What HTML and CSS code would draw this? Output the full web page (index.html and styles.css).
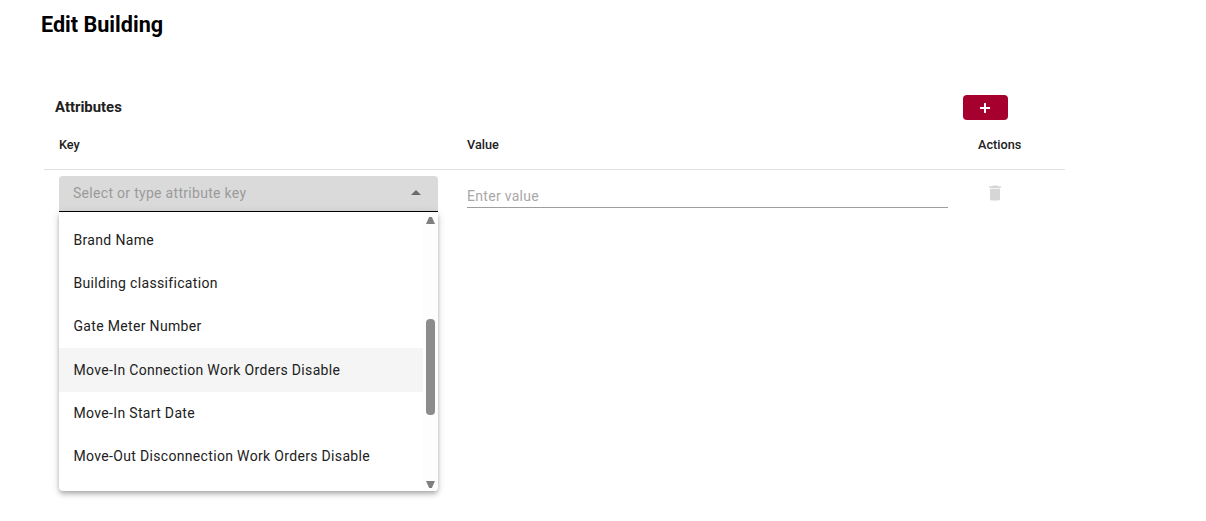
FILE: index.html
```
<!DOCTYPE html>
<html lang="en">
<head>
<meta charset="utf-8">
<title>Edit Building</title>
<link rel="stylesheet" href="styles.css">
</head>
<body>
<main class="page">
  <h1 class="title">Edit Building</h1>
  <section class="attributes">
    <div class="attr-head">
      <h2 class="attr-title">Attributes</h2>
      <button class="add-btn" type="button" aria-label="Add">
        <svg class="plus" width="12" height="12" viewBox="0 0 12 12"><path d="M6 1v10M1 6h10" stroke="#fff" stroke-width="2" fill="none"/></svg>
      </button>
    </div>
    <div class="grid grid-head">
      <div class="col-key">Key</div>
      <div class="col-value">Value</div>
      <div class="col-actions">Actions</div>
    </div>
    <div class="grid grid-row">
      <div class="key-cell">
        <div class="select">
          <span class="select-text">Select or type attribute key</span>
          <span class="caret"></span>
        </div>
        <div class="panel">
          <ul class="options">
            <li class="option">Brand Name</li>
            <li class="option">Building classification</li>
            <li class="option">Gate Meter Number</li>
            <li class="option active">Move-In Connection Work Orders Disable</li>
            <li class="option">Move-In Start Date</li>
            <li class="option">Move-Out Disconnection Work Orders Disable</li>
          </ul>
          <div class="scrollbar">
            <span class="arrow-up"></span>
            <span class="thumb"></span>
            <span class="arrow-down"></span>
          </div>
        </div>
      </div>
      <div class="value-cell">
        <div class="value-input">Enter value</div>
      </div>
      <div class="action-cell">
        <svg class="trash" viewBox="0 0 24 24"><path d="M6 19c0 1.100.9 2 2 2h8c1.100 0 2-.9 2-2V7H6v12zM19 4h-3.500l-1-1h-5l-1 1H5v2h14V4z" fill="#d6d6d6"/></svg>
      </div>
    </div>
  </section>
</main>
</body>
</html>
```
FILE: styles.css
```
* { box-sizing: border-box; }
html, body { margin: 0; padding: 0; background: #fff; }
body {
  width: 1206px;
  height: 521px;
  overflow: hidden;
  font-family: Roboto, "Liberation Sans", sans-serif;
  color: #212121;
}
.page { padding: 11px 0 0 41px; }
.title {
  margin: 0;
  font-size: 21.600px;
  line-height: 28px;
  font-weight: 700;
  color: #000;
}
.attributes { width: 1021px; margin: 56px 0 0 3px; }
.attr-head {
  display: flex;
  justify-content: space-between;
  align-items: center;
  height: 25px;
  padding: 0 57px 0 11px;
}
.attr-title {
  margin: -2px 0 0;
  font-size: 14.900px;
  font-weight: 700;
  color: #212121;
}
.add-btn {
  display: flex;
  align-items: center;
  justify-content: center;
  width: 45px;
  height: 25px;
  padding: 0;
  border: 0;
  border-radius: 4px;
  background: #a5002e;
}
.plus { margin-right: 1px; }
.grid {
  display: grid;
  grid-template-columns: 408px 511px 1fr;
  padding-left: 15px;
}
.grid-head {
  height: 50px;
  align-items: center;
  border-bottom: 1px solid #e0e0e0;
  font-size: 12.700px;
  font-weight: 500;
  color: #212121;
}
.grid-row { padding-top: 6px; }
.key-cell { position: relative; width: 379px; }
.select {
  display: flex;
  align-items: center;
  justify-content: space-between;
  height: 36px;
  padding: 0 17px 2px 14px;
  background: #dadada;
  border-bottom: 1.500px solid #000;
  border-radius: 4px 4px 0 0;
  font-size: 14px;
  letter-spacing: .3px;
  color: #9a9a9a;
}
.caret {
  width: 0;
  height: 0;
  border-left: 5px solid transparent;
  border-right: 5px solid transparent;
  border-bottom: 5px solid #6b6b6b;
}
.panel {
  position: absolute;
  top: 36px;
  left: 0;
  width: 379px;
  height: 279px;
  overflow: hidden;
  background: #fff;
  border-radius: 0 0 4px 4px;
  box-shadow: 0 2px 4px -1px rgba(0,0,0,.2), 0 4px 5px 0 rgba(0,0,0,.14), 0 1px 10px 0 rgba(0,0,0,.12);
}
.options { margin: 0; padding: 6.900px 0 0; list-style: none; }
.option {
  display: flex;
  align-items: center;
  height: 43.200px;
  padding: 0 0 1px 14.500px;
  font-size: 14px;
  letter-spacing: .33px;
  color: #212121;
}
.option.active { background: #f5f5f5; }
.scrollbar {
  position: absolute;
  top: 0;
  right: 0;
  bottom: 0;
  width: 15px;
  background: #fdfdfd;
}
.arrow-up, .arrow-down {
  position: absolute;
  left: 3px;
  width: 9px;
  height: 7px;
  background: #7f7f7f;
}
.arrow-up { top: 5px; clip-path: polygon(35% 0, 65% 0, 100% 100%, 0 100%); }
.arrow-down { bottom: 3px; clip-path: polygon(0 0, 100% 0, 65% 100%, 35% 100%); }
.thumb {
  position: absolute;
  top: 107px;
  left: 3px;
  width: 9px;
  height: 96px;
  border-radius: 4px;
  background: #8c8c8c;
}
.value-input {
  width: 481px;
  height: 32px;
  padding-top: 12px;
  border-bottom: 1px solid #9e9e9e;
  font-size: 14px;
  letter-spacing: .3px;
  color: #a8a8a8;
}
.action-cell { padding-left: 7px; padding-top: 6.500px; }
.trash { display: block; width: 20px; height: 20px; }
```
